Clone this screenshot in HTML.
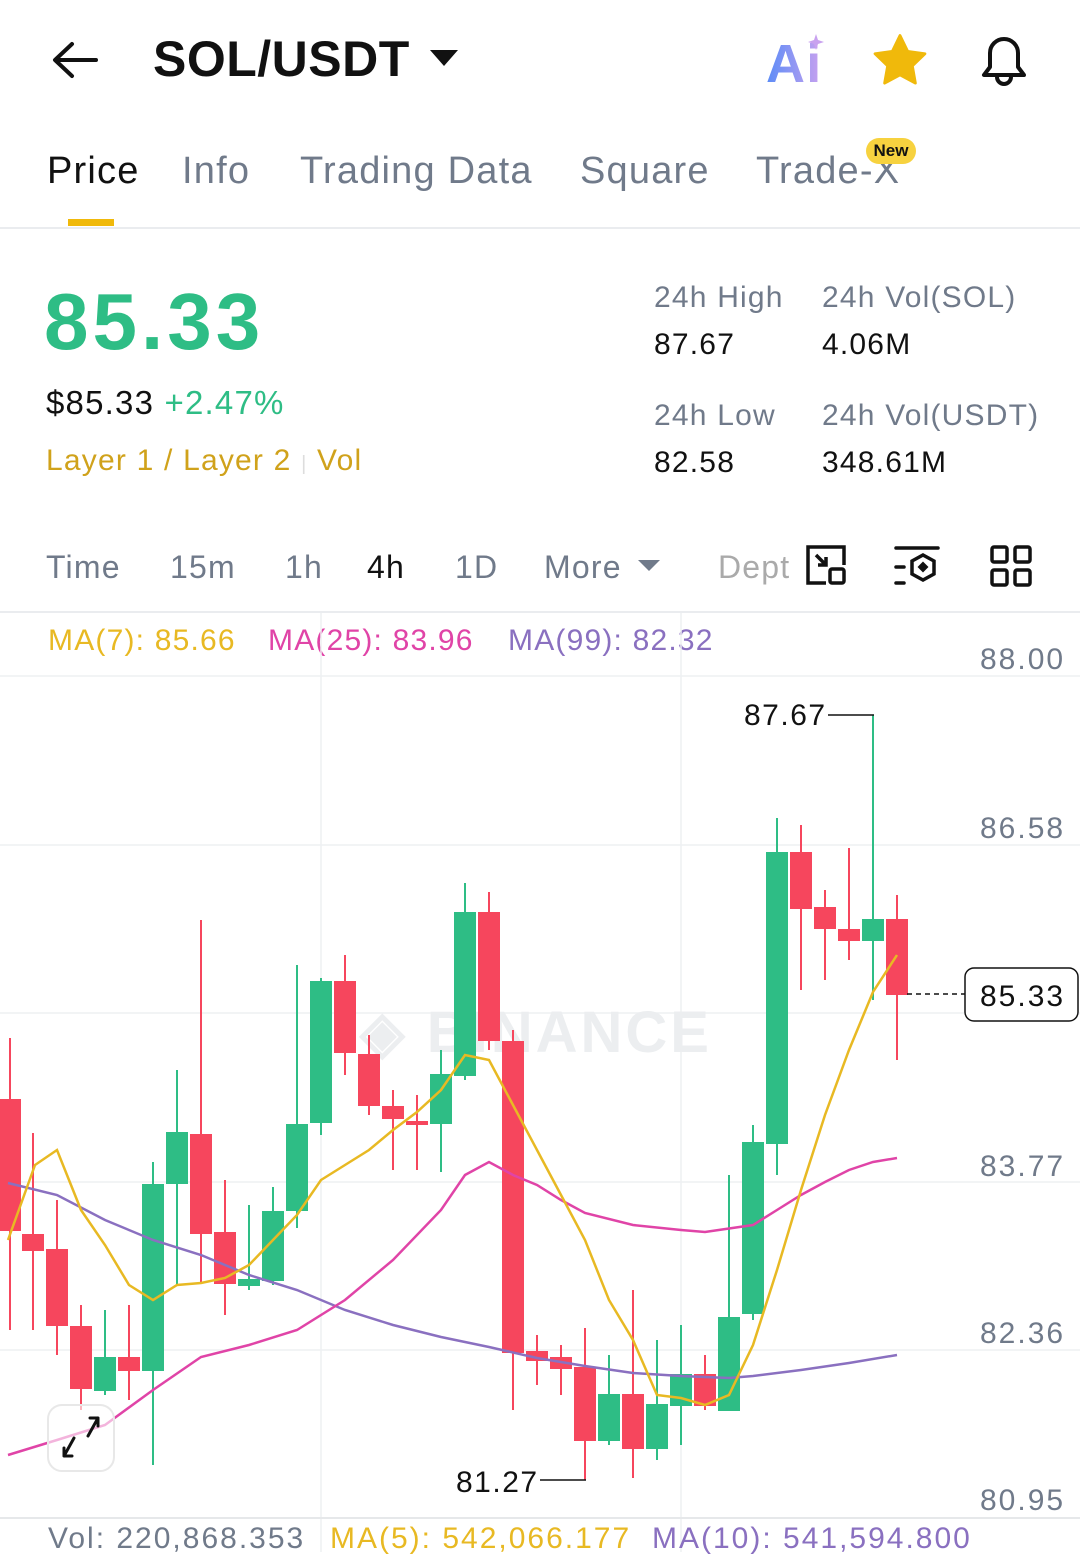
<!DOCTYPE html>
<html><head><meta charset="utf-8"><style>
*{margin:0;padding:0;box-sizing:border-box}
body{width:1080px;height:1552px;overflow:hidden;background:#fff;font-family:"Liberation Sans",sans-serif;position:relative;color:#1e2329}
.a{position:absolute;white-space:nowrap;letter-spacing:1.2px}
</style></head><body>
<svg class="a" style="left:50px;top:40px" width="50" height="40" viewBox="0 0 50 40"><path d="M46 20H6M22 4L5 20l17 16" fill="none" stroke="#111" stroke-width="4" stroke-linecap="round" stroke-linejoin="round"/></svg>
<div class="a" style="left:153px;top:30px;font-size:50px;font-weight:bold;color:#111;letter-spacing:0.5px">SOL/USDT</div>
<svg class="a" style="left:430px;top:50px" width="28" height="18"><path d="M0 0h28L14 16z" fill="#111"/></svg>
<svg class="a" style="left:764px;top:30px" width="64" height="56"><defs><linearGradient id="g" x1="0" x2="1"><stop offset="0" stop-color="#5b8cf7"/><stop offset="1" stop-color="#c9a2ef"/></linearGradient></defs><text x="2" y="52" font-family="Liberation Sans" font-weight="bold" font-size="54" fill="url(#g)">Ai</text><path d="M52 4l2 6 6 2-6 2-2 6-2-6-6-2 6-2z" fill="#c9a2ef"/></svg>
<svg class="a" style="left:872px;top:33px" width="56" height="54" viewBox="0 0 24 23"><path d="M12 1l3.3 6.8 7.4 1-5.4 5.2 1.3 7.4L12 17.9 5.4 21.4l1.3-7.4L1.3 8.8l7.4-1z" fill="#f0b90b" stroke="#f0b90b" stroke-linejoin="round" stroke-width="1.2"/></svg>
<svg class="a" style="left:976px;top:31px" width="56" height="56" viewBox="0 0 56 56"><path d="M8 44h40l-6-8V22a14 14 0 0 0-28 0v14z" fill="none" stroke="#111" stroke-width="4" stroke-linejoin="round"/><path d="M21 46a7 7 0 0 0 14 0" fill="none" stroke="#111" stroke-width="4"/></svg>
<div class="a" style="left:47px;top:150px;font-size:38px;color:#111">Price</div>
<div class="a" style="left:68px;top:219px;width:46px;height:7px;background:#f0b90b"></div>
<div class="a" style="left:182px;top:150px;font-size:38px;color:#707a8a">Info</div>
<div class="a" style="left:300px;top:150px;font-size:38px;color:#707a8a">Trading Data</div>
<div class="a" style="left:580px;top:150px;font-size:38px;color:#707a8a">Square</div>
<div class="a" style="left:756px;top:150px;font-size:38px;color:#707a8a">Trade-X</div>
<div class="a" style="left:866px;top:138px;width:50px;height:26px;border-radius:13px;background:#f7d23f;font-size:17px;font-weight:bold;text-align:center;line-height:26px;color:#111;letter-spacing:0">New</div>
<div class="a" style="left:0;top:227px;width:1080px;height:2px;background:#eaecef"></div>
<div class="a" style="left:44px;top:276px;font-size:80px;font-weight:bold;color:#2ebd85;letter-spacing:4px">85.33</div>
<div class="a" style="left:46px;top:384px;font-size:33px;color:#111">$85.33 <span style="color:#2ebd85">+2.47%</span></div>
<div class="a" style="left:46px;top:444px;font-size:30px;color:#d0a21b">Layer 1 / Layer 2 <span style="color:#ddd;font-size:20px">|</span> Vol</div>
<div class="a" style="left:654px;top:281px;font-size:30px;color:#707a8a">24h High</div>
<div class="a" style="left:654px;top:328px;font-size:30px;color:#111">87.67</div>
<div class="a" style="left:822px;top:281px;font-size:30px;color:#707a8a">24h Vol(SOL)</div>
<div class="a" style="left:822px;top:328px;font-size:30px;color:#111">4.06M</div>
<div class="a" style="left:654px;top:399px;font-size:30px;color:#707a8a">24h Low</div>
<div class="a" style="left:654px;top:446px;font-size:30px;color:#111">82.58</div>
<div class="a" style="left:822px;top:399px;font-size:30px;color:#707a8a">24h Vol(USDT)</div>
<div class="a" style="left:822px;top:446px;font-size:30px;color:#111">348.61M</div>
<div class="a" style="left:46px;top:549px;font-size:32px;color:#707a8a">Time</div>
<div class="a" style="left:170px;top:549px;font-size:32px;color:#707a8a">15m</div>
<div class="a" style="left:285px;top:549px;font-size:32px;color:#707a8a">1h</div>
<div class="a" style="left:367px;top:549px;font-size:32px;color:#111">4h</div>
<div class="a" style="left:455px;top:549px;font-size:32px;color:#707a8a">1D</div>
<div class="a" style="left:544px;top:549px;font-size:32px;color:#707a8a">More</div>
<svg class="a" style="left:638px;top:560px" width="22" height="12"><path d="M0 0h22L11 11z" fill="#707a8a"/></svg>
<div class="a" style="left:718px;top:549px;font-size:32px;color:#aaa;width:80px;overflow:hidden">Dept</div>
<svg class="a" style="left:804px;top:543px" width="44" height="44" viewBox="0 0 44 44" fill="none" stroke="#111" stroke-width="3.5"><path d="M4 30V4h36v18M4 30v10h18"/><path d="M12 12l10 10M22 14v8h-8"/><rect x="26" y="26" width="14" height="14" rx="2"/></svg>
<svg class="a" style="left:894px;top:545px" width="48" height="42" viewBox="0 0 48 42" fill="none" stroke="#111" stroke-width="3.5" stroke-linecap="round"><path d="M2 3h42M2 22h8M2 38h8"/><path d="M29 10l11 6v13l-11 6-11-6V16z"/><path d="M29 19l3 3-3 3-3-3z" fill="#111"/></svg>
<svg class="a" style="left:990px;top:545px" width="42" height="42" viewBox="0 0 42 42" fill="none" stroke="#111" stroke-width="3.5"><rect x="2" y="2" width="15" height="15" rx="2"/><rect x="25" y="2" width="15" height="15" rx="2"/><rect x="2" y="25" width="15" height="15" rx="2"/><rect x="25" y="25" width="15" height="15" rx="2"/></svg>
<div class="a" style="left:0;top:611px;width:1080px;height:2px;background:#eaecef"></div>
<div class="a" style="left:48px;top:624px;font-size:30px;color:#e8b923">MA(7): 85.66</div>
<div class="a" style="left:268px;top:624px;font-size:30px;color:#e044a7">MA(25): 83.96</div>
<div class="a" style="left:508px;top:624px;font-size:30px;color:#8a70c0">MA(99): 82.32</div>
<svg class="a" style="left:0;top:0;letter-spacing:0" width="1080" height="1552">
<g stroke="#eef0f2" stroke-width="1.5"><path d="M0 676H1080M0 845H1080M0 1013H1080M0 1182H1080M0 1350H1080M321 613V1552M681 613V1552"/><path d="M0 1518H1080" stroke="#e6e8ea" stroke-width="2"/></g>
<g font-family="Liberation Sans" font-size="30" fill="#707a8a" letter-spacing="2"><text x="980" y="669">88.00</text><text x="980" y="838">86.58</text><text x="980" y="1176">83.77</text><text x="980" y="1343">82.36</text><text x="980" y="1510">80.95</text></g>
<text x="360" y="1052" font-family="Liberation Sans" font-size="58" font-weight="bold" fill="#eceef0" letter-spacing="3">◈ BINANCE</text>
<g stroke-width="2">
<g stroke="#f6465d" fill="#f6465d">
<path d="M10 1038V1330M33 1133V1330M57 1200V1355M81 1305V1410M129 1305V1400M201 920V1283M225 1180V1315M345 955V1075M369 1035V1115M393 1090V1170M417 1095V1170M489 892V1050M513 1030V1410M537 1335V1385M561 1345V1395M585 1328V1480M633 1290V1478M705 1355V1410M801 825V990M825 890V980M849 848V960M897 895V1060"/>
<rect x="0" y="1100" width="20" height="130"/><rect x="23" y="1235" width="20" height="15"/><rect x="47" y="1250" width="20" height="75"/><rect x="71" y="1327" width="20" height="61"/><rect x="119" y="1358" width="20" height="12"/><rect x="191" y="1135" width="20" height="98"/><rect x="215" y="1233" width="20" height="50"/><rect x="335" y="982" width="20" height="70"/><rect x="359" y="1055" width="20" height="50"/><rect x="383" y="1107" width="20" height="11"/><rect x="407" y="1122" width="20" height="2"/><rect x="479" y="913" width="20" height="127"/><rect x="503" y="1042" width="20" height="310"/><rect x="527" y="1352" width="20" height="8"/><rect x="551" y="1358" width="20" height="10"/><rect x="575" y="1368" width="20" height="72"/><rect x="623" y="1395" width="20" height="53"/><rect x="695" y="1375" width="20" height="30"/><rect x="791" y="853" width="20" height="55"/><rect x="815" y="908" width="20" height="20"/><rect x="839" y="930" width="20" height="10"/><rect x="887" y="920" width="20" height="74"/>
</g>
<g stroke="#2ebd85" fill="#2ebd85">
<path d="M105 1310V1395M153 1162V1465M177 1070V1285M249 1205V1290M273 1187V1285M297 965V1228M321 978V1135M441 1050V1172M465 883V1080M609 1355V1445M657 1340V1460M681 1325V1445M729 1175V1410M753 1125V1320M777 818V1175M873 715V1000"/>
<rect x="95" y="1358" width="20" height="32"/><rect x="143" y="1185" width="20" height="185"/><rect x="167" y="1133" width="20" height="50"/><rect x="239" y="1280" width="20" height="5"/><rect x="263" y="1212" width="20" height="68"/><rect x="287" y="1125" width="20" height="85"/><rect x="311" y="982" width="20" height="140"/><rect x="431" y="1075" width="20" height="48"/><rect x="455" y="913" width="20" height="162"/><rect x="599" y="1395" width="20" height="45"/><rect x="647" y="1405" width="20" height="43"/><rect x="671" y="1375" width="20" height="30"/><rect x="719" y="1318" width="20" height="92"/><rect x="743" y="1143" width="20" height="170"/><rect x="767" y="853" width="20" height="290"/><rect x="863" y="920" width="20" height="20"/>
</g></g>
<g fill="none" stroke-width="2.5">
<polyline stroke="#8a70c0" points="8,1183 57,1195 105,1220 153,1240 201,1255 249,1275 297,1290 345,1310 393,1325 441,1337 489,1347 537,1358 585,1366 633,1373 681,1376 729,1378 753,1376 801,1370 849,1363 897,1355"/>
<polyline stroke="#e044a7" points="8,1455 57,1440 105,1425 153,1390 201,1357 249,1345 297,1330 345,1300 393,1260 441,1210 465,1175 489,1162 513,1175 537,1185 561,1200 585,1213 633,1225 681,1230 705,1232 753,1225 777,1210 801,1195 825,1182 849,1170 873,1162 897,1158"/>
<polyline stroke="#e8b923" points="8,1240 35,1165 57,1150 81,1210 105,1245 129,1285 153,1300 177,1285 201,1283 225,1278 249,1265 273,1240 297,1215 321,1180 345,1165 369,1150 393,1130 417,1112 441,1090 465,1055 489,1060 513,1105 537,1150 561,1195 585,1240 609,1300 633,1340 657,1395 681,1398 705,1405 729,1395 753,1345 777,1270 801,1190 825,1115 849,1050 873,992 897,955"/>
</g>
<path d="M828 715H874M540 1480H586" stroke="#111" stroke-width="1.5"/>
<path d="M907 994H965" stroke="#111" stroke-width="1.5" stroke-dasharray="5 4"/>
<g font-family="Liberation Sans" font-size="30" fill="#111" letter-spacing="1.5"><text x="744" y="725">87.67</text><text x="456" y="1492">81.27</text></g>
<rect x="965" y="968" width="113" height="53" rx="9" fill="#fff" stroke="#111" stroke-width="1.5"/>
<text x="980" y="1006" font-family="Liberation Sans" font-size="30" fill="#111" letter-spacing="2">85.33</text>
<rect x="48" y="1405" width="66" height="66" rx="14" fill="rgba(255,255,255,.6)" stroke="#e8e8e8" stroke-width="2"/>
<path d="M98 1418l-10 18M98 1418h-8M98 1418v8M64 1456l10-18M64 1456h8M64 1456v-8" stroke="#111" stroke-width="3" fill="none" stroke-linecap="round"/>
</svg>
<div class="a" style="left:48px;top:1522px;font-size:30px;color:#707a8a;letter-spacing:2px">Vol: 220,868.353</div>
<div class="a" style="left:330px;top:1522px;font-size:30px;color:#e8b923;letter-spacing:2px">MA(5): 542,066.177</div>
<div class="a" style="left:652px;top:1522px;font-size:30px;color:#8a70c0;letter-spacing:2px">MA(10): 541,594.800</div>
</body></html>
